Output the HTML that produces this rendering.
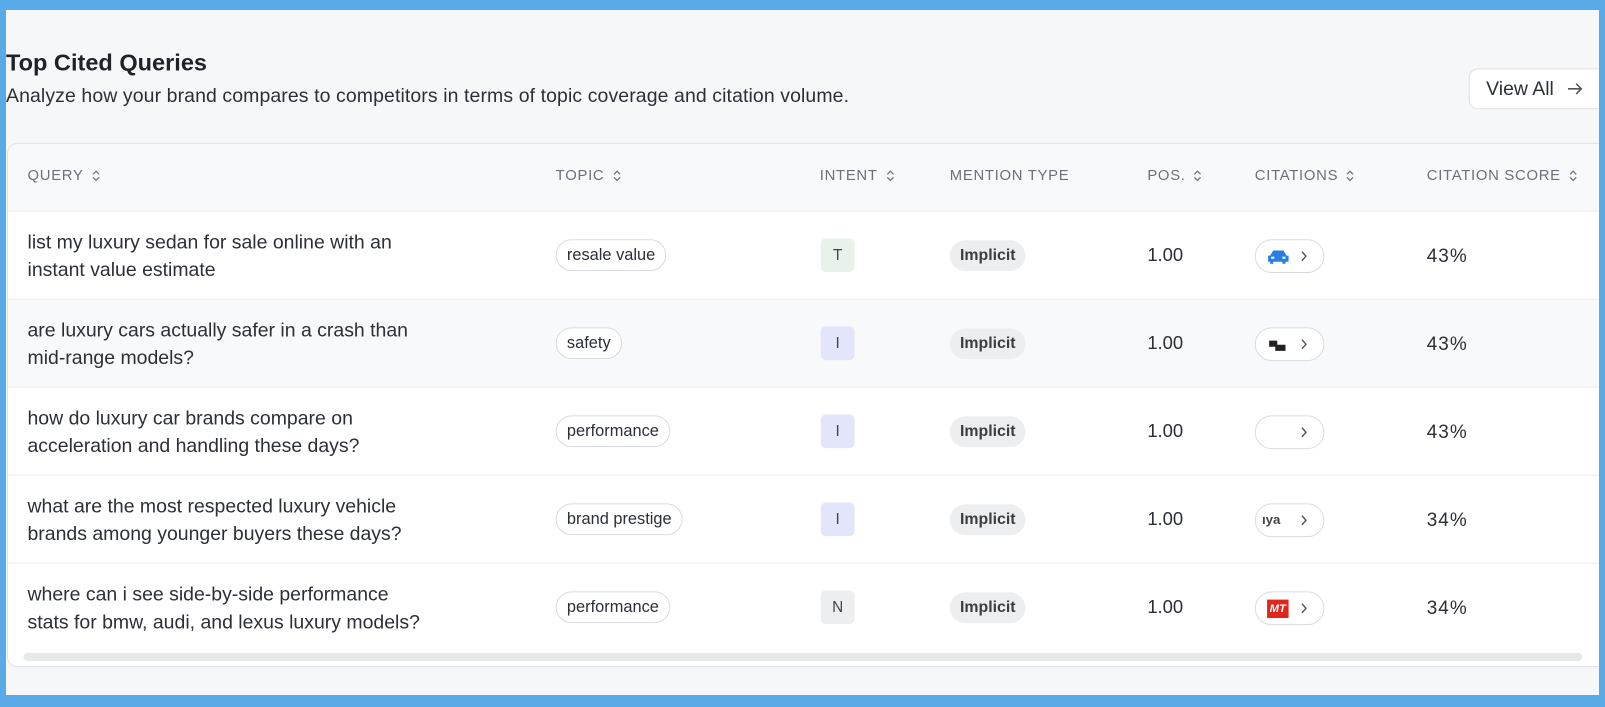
<!DOCTYPE html>
<html><head><meta charset="utf-8"><style>
*{box-sizing:border-box;margin:0;padding:0}
html,body{width:1605px;height:707px;overflow:hidden}
body{background:#5aaae8;font-family:"Liberation Sans",sans-serif;color:#2b2f36;position:relative}
.page{position:absolute;left:6px;top:10px;width:1593px;height:685px;background:#f6f7f9;overflow:hidden}
.wrap{position:absolute;left:0;top:0;width:1570px;height:670px;transform:scale(1.0236);transform-origin:0 0}
h1{position:absolute;left:0;top:38px;font-size:23px;font-weight:bold;color:#1f2329}
.sub{position:absolute;left:0;top:74px;font-size:19px;letter-spacing:.1px;color:#2b2f36}
.btn{position:absolute;left:1429px;top:57px;width:180px;height:40px;background:#fff;border:1px solid #dfe1e5;border-radius:9px;font-size:19px;padding:9px 0 0 16px;color:#2b2f36}
.card{position:absolute;left:1px;top:130px;width:1600px;height:512px;background:#fff;border:1px solid #dfe1e5;border-radius:10px;overflow:hidden}
.hdr{position:absolute;left:0;top:0;width:100%;height:66px;background:#f8f9fa;border-bottom:1px solid #eceef0}
.h{position:absolute;top:23px;font-size:14.5px;color:#6b7079;letter-spacing:.7px}
.h svg{vertical-align:-2px;margin-left:8px}
.row{position:absolute;left:0;width:100%;height:86px;border-bottom:1px solid #eceef0}
.q{position:absolute;left:19px;top:17px;font-size:19px;line-height:27px;color:#2b2f36}
.pill{position:absolute;left:535px;top:27px;height:31px;border:1px solid #d9dce0;border-radius:16px;font-size:16px;line-height:29px;padding:0 10px;background:#fff}
.int{position:absolute;left:794px;top:26px;width:33px;height:33px;border-radius:5px;font-size:15px;text-align:center;line-height:33px;color:#444}
.imp{position:absolute;left:920px;top:28px;height:30px;border-radius:15px;background:#eceef0;font-size:15.5px;line-height:30px;padding:0 10px;font-weight:bold;color:#3a3d42}
.pos{position:absolute;left:1113px;top:32px;font-size:18px}
.cit{position:absolute;left:1218px;top:27px;width:68px;height:33px;border:1px solid #d9dce0;border-radius:17px;background:#fff}
.cit .ch{position:absolute;left:43px;top:9px}
.cit .ic{position:absolute;left:11px;top:9px}
.sc{position:absolute;left:1386px;top:32px;font-size:18.5px;letter-spacing:1px}
.scroll{position:absolute;left:15px;top:497px;width:1523px;height:8px;border-radius:4px;background:#e6e8eb}
</style></head><body>
<div class="page"><div class="wrap">
<h1>Top Cited Queries</h1>
<div class="sub">Analyze how your brand compares to competitors in terms of topic coverage and citation volume.</div>
<div class="btn">View All <svg width="16" height="14" viewBox="0 0 16 14" style="margin-left:8px;vertical-align:-1px"><path d="M1 7h13M9 2l5 5-5 5" stroke="#555" stroke-width="1.5" fill="none"/></svg></div>
<div class="card">
<div class="hdr">
<div class="h" style="left:19px">QUERY<svg width="8" height="12" viewBox="0 0 8 12"><path d="M1 4.5L4 1.5 7 4.5M1 7.5L4 10.5 7 7.5" stroke="#777" stroke-width="1.3" fill="none"/></svg></div>
<div class="h" style="left:535px">TOPIC<svg width="8" height="12" viewBox="0 0 8 12"><path d="M1 4.5L4 1.5 7 4.5M1 7.5L4 10.5 7 7.5" stroke="#777" stroke-width="1.3" fill="none"/></svg></div>
<div class="h" style="left:793px">INTENT<svg width="8" height="12" viewBox="0 0 8 12"><path d="M1 4.5L4 1.5 7 4.5M1 7.5L4 10.5 7 7.5" stroke="#777" stroke-width="1.3" fill="none"/></svg></div>
<div class="h" style="left:920px">MENTION TYPE</div>
<div class="h" style="left:1113px">POS.<svg width="8" height="12" viewBox="0 0 8 12"><path d="M1 4.5L4 1.5 7 4.5M1 7.5L4 10.5 7 7.5" stroke="#777" stroke-width="1.3" fill="none"/></svg></div>
<div class="h" style="left:1218px">CITATIONS<svg width="8" height="12" viewBox="0 0 8 12"><path d="M1 4.5L4 1.5 7 4.5M1 7.5L4 10.5 7 7.5" stroke="#777" stroke-width="1.3" fill="none"/></svg></div>
<div class="h" style="left:1386px">CITATION SCORE<svg width="8" height="12" viewBox="0 0 8 12"><path d="M1 4.5L4 1.5 7 4.5M1 7.5L4 10.5 7 7.5" stroke="#777" stroke-width="1.3" fill="none"/></svg></div>
</div>

<div class="row" style="top:66px">
<div class="q">list my luxury sedan for sale online with an<br>instant value estimate</div>
<div class="pill">resale value</div>
<div class="int" style="background:#e8f2ea">T</div>
<div class="imp">Implicit</div><div class="pos">1.00</div>
<div class="cit"><svg class="ic" width="22" height="14" viewBox="0 0 22 14"><path d="M3 6l3-5h10l3 5h2v6h-3v2h-3v-2H6v2H3v-2H1V6z" fill="#2a7de1"/><rect x="4" y="7" width="3" height="2" fill="#fff"/><rect x="15" y="7" width="3" height="2" fill="#fff"/></svg><svg class="ch" width="8" height="13" viewBox="0 0 8 13"><path d="M2 2l4 4.5L2 11" stroke="#555" stroke-width="1.4" fill="none"/></svg></div>
<div class="sc">43%</div></div>

<div class="row" style="top:152px;background:#f8f9fa">
<div class="q">are luxury cars actually safer in a crash than<br>mid-range models?</div>
<div class="pill">safety</div>
<div class="int" style="background:#e3e5fb">I</div>
<div class="imp">Implicit</div><div class="pos">1.00</div>
<div class="cit"><svg class="ic" width="22" height="14" viewBox="0 0 22 14"><path d="M2 3h8v4h8v6H8V9H2z" fill="#222"/></svg><svg class="ch" width="8" height="13" viewBox="0 0 8 13"><path d="M2 2l4 4.5L2 11" stroke="#555" stroke-width="1.4" fill="none"/></svg></div>
<div class="sc">43%</div></div>

<div class="row" style="top:238px">
<div class="q">how do luxury car brands compare on<br>acceleration and handling these days?</div>
<div class="pill">performance</div>
<div class="int" style="background:#e3e5fb">I</div>
<div class="imp">Implicit</div><div class="pos">1.00</div>
<div class="cit"><svg class="ch" width="8" height="13" viewBox="0 0 8 13"><path d="M2 2l4 4.5L2 11" stroke="#555" stroke-width="1.4" fill="none"/></svg></div>
<div class="sc">43%</div></div>

<div class="row" style="top:324px">
<div class="q">what are the most respected luxury vehicle<br>brands among younger buyers these days?</div>
<div class="pill">brand prestige</div>
<div class="int" style="background:#e3e5fb">I</div>
<div class="imp">Implicit</div><div class="pos">1.00</div>
<div class="cit"><span style="position:absolute;left:6px;top:7px;font-size:13px;font-weight:bold;color:#444">ıya</span><svg class="ch" width="8" height="13" viewBox="0 0 8 13"><path d="M2 2l4 4.5L2 11" stroke="#555" stroke-width="1.4" fill="none"/></svg></div>
<div class="sc">34%</div></div>

<div class="row" style="top:410px;border-bottom:none">
<div class="q">where can i see side-by-side performance<br>stats for bmw, audi, and lexus luxury models?</div>
<div class="pill">performance</div>
<div class="int" style="background:#eceef0">N</div>
<div class="imp">Implicit</div><div class="pos">1.00</div>
<div class="cit"><span style="position:absolute;left:11px;top:7px;width:21px;height:18px;background:#e0261d;color:#fff;font-size:11px;font-weight:bold;font-style:italic;text-align:center;line-height:18px">MT</span><svg class="ch" width="8" height="13" viewBox="0 0 8 13"><path d="M2 2l4 4.5L2 11" stroke="#555" stroke-width="1.4" fill="none"/></svg></div>
<div class="sc">34%</div></div>

<div class="scroll"></div>
</div>
</div></div>
</body></html>
